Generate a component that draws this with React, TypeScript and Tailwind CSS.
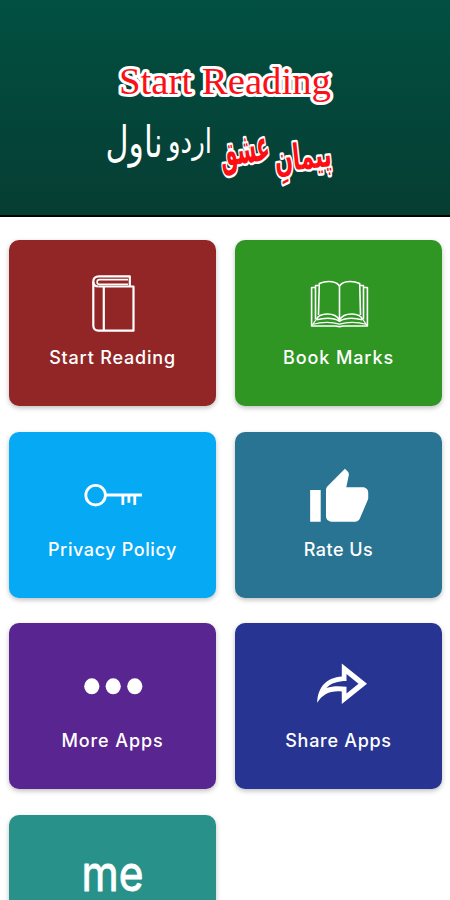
import React from 'react';

type Tile = {
  id: string;
  label?: string;
  color: string;
  tracking?: string;
  icon: React.ReactNode;
};

const Icon: React.FC<{ children: React.ReactNode }> = ({ children }) => (
  <svg viewBox="0 0 60 60" className="w-[60px] h-[60px] overflow-visible" fill="none" stroke="white">
    {children}
  </svg>
);

const BookIcon = () => (
  <Icon>
    <g strokeWidth="2.2" strokeLinejoin="round">
      <path d="M46.8 12.3V2.3H16C12 2.3 10.3 4.5 10.3 7.5V51.5c0 3 2 5.2 5 5.2H50.5V12.5H16" />
      <path d="M45 5.6H16.5a2.4 2.4 0 0 0 0 4.8H45" strokeWidth="1.6" />
      <path d="M10.3 8c0 3 2 4.5 5.5 4.5M20.8 12.5V56.5" />
    </g>
  </Icon>
);

const OpenBookIcon = () => (
  <Icon>
    <g strokeWidth="1.6" strokeLinejoin="round">
      {/* pages */}
      <path d="M30.5 12.5V46M30.5 12.5C28.5 7.5 19 6 10.3 9.5L9.5 41M30.5 12.5C32.5 7.5 42 6 50.7 9.5L51.5 41" />
      <path d="M7.5 45.8C9 38.5 26 37.5 30.5 46 35 37.5 52 38.5 53.5 45.8" />
      <path d="M7.5 45.8c8-2 17-2.2 23 1.4 6-3.6 15-3.4 23-1.4" />
      {/* cover */}
      <path d="M9.8 11.5H6.5V45.5M51.2 11.5H54.5V45.5" />
      <path d="M6 13.5H2.6V52H26.5l4 .6 4-.6H58.4V13.5H55" />
      <path d="M3 51.5 6.8 46M58 51.5 54.2 46M3 50.5c10-2.6 20-2.5 27.5-.3 7.5-2.2 17.5-2.3 27.5.3" strokeWidth="1.2" />
    </g>
  </Icon>
);

const KeyIcon = () => (
  <Icon>
    <circle cx="12.6" cy="29.2" r="9.8" strokeWidth="2.8" />
    <path d="M23 29H59M39.9 29V39M45.9 29V36.7M51.8 29V39" strokeWidth="2.8" />
  </Icon>
);

const ThumbIcon = () => (
  <Icon>
    <path
      transform="translate(-1.5 .2) scale(2.64)"
      fill="white"
      stroke="none"
      d="M1 21h4V9H1v12zm22-11c0-1.1-.9-2-2-2h-6.310l.95-4.570.03-.32c0-.41-.17-.79-.44-1.060L14.170 1 7.590 7.590C7.220 7.950 7 8.450 7 9v10c0 1.100.9 2 2 2h9c.83 0 1.540-.5 1.840-1.220l3.020-7.050c.09-.23.14-.47.14-.73v-2z"
    />
  </Icon>
);

const DotsIcon = () => (
  <Icon>
    <g fill="white" stroke="none">
      <ellipse cx="8.8" cy="29.3" rx="7.6" ry="8" />
      <ellipse cx="30.2" cy="29.3" rx="7.6" ry="8" />
      <ellipse cx="51.8" cy="29.3" rx="7.6" ry="8" />
    </g>
  </Icon>
);

const ShareIcon = () => (
  <Icon>
    <path
      fill="white"
      fillRule="evenodd"
      stroke="none"
      d="M32.8 6.5 58 26.7 32.8 47V34.5C21 33.5 14 37 8.2 45.8 8.500 30 18 20.500 32.800 19.500ZM37.500 17V24C29 24 22 26 17.500 31c6-2 12-2 20-1.200v6.700L49.500 26.700Z"
    />
  </Icon>
);

const MeIcon = () => (
  <Icon>
    <text
      x="-1.5"
      y="41.5"
      textLength="62"
      lengthAdjust="spacingAndGlyphs"
      fill="white"
      strokeWidth=".9"
      strokeLinejoin="round"
      className="font-['Inter',sans-serif] text-[50px] font-normal"
    >
      me
    </text>
  </Icon>
);

const tiles: Tile[] = [
  { id: 'read', label: 'Start Reading', color: 'bg-[#922627]', tracking: 'tracking-[0.8px]', icon: <BookIcon /> },
  { id: 'marks', label: 'Book Marks', color: 'bg-[#2f9624]', tracking: 'tracking-[0.9px]', icon: <OpenBookIcon /> },
  { id: 'privacy', label: 'Privacy Policy', color: 'bg-[#05a9f4]', tracking: 'tracking-[0.6px]', icon: <KeyIcon /> },
  { id: 'rate', label: 'Rate Us', color: 'bg-[#297492]', tracking: 'tracking-[0.5px]', icon: <ThumbIcon /> },
  { id: 'more', label: 'More Apps', color: 'bg-[#592691]', tracking: 'tracking-[0.9px]', icon: <DotsIcon /> },
  { id: 'share', label: 'Share Apps', color: 'bg-[#273492]', tracking: 'tracking-[0.7px]', icon: <ShareIcon /> },
  { id: 'me', color: 'bg-[#28928a]', icon: <MeIcon /> },
];

const Header = () => (
  <header className="h-[217px] border-b-2 border-black bg-linear-to-b from-[#015041] to-[#063d33]">
    <svg viewBox="0 0 450 215" className="w-full h-[215px]">
      <g strokeLinejoin="round" paintOrder="stroke">
        <text x="119" y="93.5" textLength="212" lengthAdjust="spacingAndGlyphs" fill="#fb1018" stroke="white" strokeWidth="6" className="font-['Liberation_Serif',serif] text-[37px]">
          Start Reading
        </text>
        <g fill="#fb0d12" stroke="white" strokeWidth="5" direction="rtl" textAnchor="middle" className="font-['DejaVu_Sans',sans-serif] font-bold">
          <text transform="rotate(-6 304 168)" x="304" y="169" textLength="57" lengthAdjust="spacingAndGlyphs" className="text-[36px]">پیمانِ</text>
          <text transform="rotate(-8 246 161)" x="246" y="163" textLength="50" lengthAdjust="spacingAndGlyphs" className="text-[42px]">عشق</text>
        </g>
        <g fill="white" direction="rtl" textAnchor="middle" className="font-['DejaVu_Sans',sans-serif]">
          <text x="190" y="153" textLength="44" lengthAdjust="spacingAndGlyphs" className="text-[34px]">اردو</text>
          <text x="134" y="157" textLength="57" lengthAdjust="spacingAndGlyphs" className="text-[43px]">ناول</text>
        </g>
      </g>
    </svg>
  </header>
);

export default function App() {
  return (
    <div className="h-[900px] overflow-hidden bg-white">
      <Header />
      <main className="grid grid-cols-2 gap-x-[19px] gap-y-[25.5px] pl-[9px] pr-2 pt-[23px]">
        {tiles.map((tile) => (
          <div
            key={tile.id}
            className={`flex flex-col items-center h-[166px] pt-[34px] rounded-[10px] shadow-[0_2px_5px_rgba(0,0,0,0.25)] ${tile.color}`}
          >
            {tile.icon}
            {tile.label && (
              <span className={`mt-2.5 leading-7 text-lg font-medium whitespace-nowrap text-white font-['Inter',sans-serif] ${tile.tracking}`}>
                {tile.label}
              </span>
            )}
          </div>
        ))}
      </main>
    </div>
  );
}
